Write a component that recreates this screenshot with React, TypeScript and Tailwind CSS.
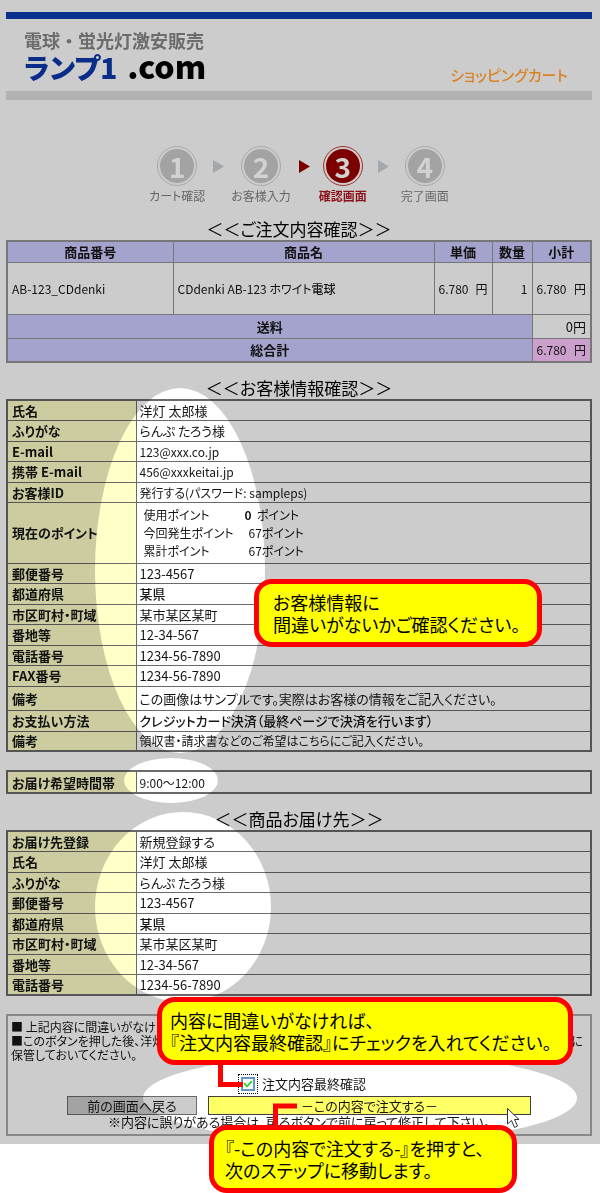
import type { ReactNode } from "react"

type Row = { label: string; value: ReactNode; size?: string; small?: boolean }

const points = [
  { label: "使用ポイント", value: <><b>0</b>&nbsp; ポイント</>, pad: "" },
  { label: "今回発生ポイント", value: "67ポイント", pad: "pl-1" },
  { label: "累計ポイント", value: "67ポイント", pad: "pl-1" },
]

const Points = () => (
  <div className="px-1">
    {points.map((p) => (
      <div key={p.label} className="flex leading-[18px]">
        <span className="w-[101px]">{p.label}</span>
        <span className={p.pad}>{p.value}</span>
      </div>
    ))}
  </div>
)

const customer: Row[] = [
  { label: "氏名", value: "洋灯 太郎様" },
  { label: "ふりがな", value: "らんぷ たろう様" },
  { label: "E-mail", value: "123@xxx.co.jp", small: true },
  { label: "携帯 E-mail", value: "456@xxxkeitai.jp", small: true },
  { label: "お客様ID", value: "発行する(パスワード: sampleps)", small: true },
  { label: "現在のポイント", value: <Points />, size: "h-[61px]", small: true },
  { label: "郵便番号", value: "123-4567" },
  { label: "都道府県", value: <span className="font-medium">某県</span> },
  { label: "市区町村・町域", value: "某市某区某町" },
  { label: "番地等", value: "12-34-567" },
  { label: "電話番号", value: "1234-56-7890" },
  { label: "FAX番号", value: "1234-56-7890" },
  { label: "備考", value: "この画像はサンプルです。実際はお客様の情報をご記入ください。", size: "h-6" },
  { label: "お支払い方法", value: <span className="font-medium">クレジットカード決済（最終ページで決済を行います）</span> },
  { label: "備考", value: "領収書・請求書などのご希望はこちらにご記入ください。", small: true },
]

const delivery: Row[] = [
  { label: "お届け先登録", value: "新規登録する" },
  { label: "氏名", value: "洋灯 太郎様" },
  { label: "ふりがな", value: "らんぷ たろう様" },
  { label: "郵便番号", value: "123-4567" },
  { label: "都道府県", value: <span className="font-medium">某県</span> },
  { label: "市区町村・町域", value: "某市某区某町" },
  { label: "番地等", value: "12-34-567" },
  { label: "電話番号", value: "1234-56-7890" },
]

const steps = [
  { no: "1", label: "カート確認", gap: "w-[26px]" },
  { no: "2", label: "お客様入力", gap: "w-7" },
  { no: "3", label: "確認画面", gap: "w-[34px]" },
  { no: "4", label: "完了画面", gap: "" },
]

const Heading = ({ children }: { children: ReactNode }) => (
  <h2 className="text-center text-[17px] leading-[22px] text-black">{children}</h2>
)

const InfoTable = ({ rows }: { rows: Row[] }) => (
  <table className="w-full table-fixed border-collapse border-2 border-[#555] text-[13px] leading-[17px]">
    <colgroup>
      <col className="w-[129px]" />
      <col />
    </colgroup>
    <tbody>
      {rows.map((r, i) => (
        <tr key={i} className={r.size ?? "h-5 even:h-[21px]"}>
          <th scope="row" className="border border-[#555] bg-[#cccca0] p-0 pl-1 text-left font-bold whitespace-nowrap">
            {r.label}
          </th>
          <td className={`border border-[#555] p-0 pl-[3px] ${r.small ? "text-[12px]" : ""}`}>{r.value}</td>
        </tr>
      ))}
    </tbody>
  </table>
)

const Steps = () => (
  <ol className="flex justify-center">
    {steps.map((s) => {
      const active = s.no === "3"
      return (
        <li key={s.no} className="flex">
          <div className="flex flex-col items-center">
            <div className={`size-10 rounded-full border p-[2px] ${active ? "border-[#a03030]" : "border-[#aaa]"}`}>
              <div
                className={`flex size-full items-center justify-center rounded-full text-[28px] leading-8 font-bold text-[#d2d2d2] ${active ? "bg-[#7c0000]" : "bg-[#a3a3a3]"}`}
              >
                {s.no}
              </div>
            </div>
            <span className={`text-[12px] leading-[20px] ${active ? "font-bold text-[#8c1018]" : "text-[#666]"}`}>
              {s.label}
            </span>
          </div>
          {s.gap && (
            <div className={`flex h-10 items-center justify-center ${s.gap}`}>
              <svg width="11" height="13" viewBox="0 0 11 13" aria-hidden="true">
                <path d="M0 0L11 6.5L0 13Z" fill={s.no === "2" ? "#7c0000" : "#a3a8ac"} />
              </svg>
            </div>
          )}
        </li>
      )
    })}
  </ol>
)

const Price = () => (
  <span className="flex justify-between text-[12px]">
    <span>6.780</span>
    <span>円</span>
  </span>
)

const OrderTable = () => (
  <table className="w-full table-fixed border-collapse border-2 border-[#777] text-[13px] leading-[17px] [&_td]:border [&_td]:border-[#777] [&_td]:px-1 [&_td]:py-0 [&_th]:border [&_th]:border-[#777] [&_th]:bg-[#a3a3cd] [&_th]:p-0">
    <colgroup>
      <col className="w-[166px]" />
      <col />
      <col className="w-[58px]" />
      <col className="w-[40px]" />
      <col className="w-[59px]" />
    </colgroup>
    <thead>
      <tr className="h-[21px]">
        <th>商品番号</th>
        <th>商品名</th>
        <th>単価</th>
        <th>数量</th>
        <th>小計</th>
      </tr>
    </thead>
    <tbody>
      <tr className="h-[52px] text-[12px] whitespace-nowrap">
        <td>AB-123_CDdenki</td>
        <td>CDdenki AB-123 ホワイト<span className="font-medium">電球</span></td>
        <td><Price /></td>
        <td className="text-right">1</td>
        <td><Price /></td>
      </tr>
      <tr className="h-6">
        <th colSpan={4}>送料</th>
        <td className="text-right">0円</td>
      </tr>
      <tr className="h-6">
        <th colSpan={4}>総合計</th>
        <td className="bg-[#cca0cc]"><Price /></td>
      </tr>
    </tbody>
  </table>
)

// Brightens the dimmed page below it back to full strength
const Spot = ({ className }: { className: string }) => (
  <div className={`pointer-events-none absolute rounded-[50%] bg-[#333] mix-blend-color-dodge ${className}`} />
)

const Callout = ({ className, children }: { className: string; children: ReactNode }) => (
  <div
    className={`absolute h-[68px] rounded-[18px] border-[5px] border-[#f00] bg-[#ff0] pt-[7px] text-[18px] leading-[22px] whitespace-nowrap text-black ${className}`}
  >
    {children}
  </div>
)

export default function App() {
  return (
    <div className="relative bg-white pb-[49px] font-['Noto_Sans_CJK_JP',sans-serif] text-[#111] [font-feature-settings:'palt']">
      <div className="bg-[#ccc] pt-3 pr-2 pb-2 pl-1.5">
        <header>
          <div className="h-[7px] bg-[#0b318f]" />
          <div className="flex h-[72px] items-end justify-between pr-6 pb-[9px] pl-[18px]">
            <div>
              <p className="text-[18px] leading-5 font-bold text-[#6c6c6c] [font-feature-settings:normal]">電球・蛍光灯激安販売</p>
              <h1 className="flex items-baseline gap-2.5 text-[28px] leading-[30px] font-black text-[#0a2d8a]">
                <span>ランプ1</span>
                <span className="text-[32px] text-black">.com</span>
              </h1>
            </div>
            <p className="text-[15px] leading-[15px] font-medium text-[#d98324]">ショッピングカート</p>
          </div>
          <div className="h-[9px] bg-[#b2b2b2]" />
        </header>

        <main className="pt-[46px]">
          <Steps />

          <div className="pt-3">
            <Heading>＜＜ご注文内容確認＞＞</Heading>
            <OrderTable />
          </div>

          <div className="pt-[14px]">
            <Heading>＜＜お客様情報確認＞＞</Heading>
            <InfoTable rows={customer} />
          </div>

          <div className="pt-[18px]">
            <InfoTable rows={[{ label: "お届け希望時間帯", value: "9:00～12:00", size: "h-[22px]", small: true }]} />
          </div>

          <div className="pt-[14px]">
            <Heading>＜＜商品お届け先＞＞</Heading>
            <InfoTable rows={delivery} />
          </div>

          <form
            className="mt-[18px] h-[122px] border-2 border-[#888] px-[3px] pt-1 text-[13px]"
            onSubmit={(e) => e.preventDefault()}
          >
            <div className="text-[12px] leading-[14px]">
              <p>■ 上記内容に間違いがなけ</p>
              <p className="flex justify-between pr-1">
                <span>■このボタンを押した後、洋灯</span>
                <span>に</span>
              </p>
              <p>保管しておいてください。</p>
            </div>
            <label className="mt-3 ml-[227px] flex w-fit items-center gap-1 leading-5">
              <span className="relative flex size-5 items-center justify-center border border-dotted border-black">
                <input
                  type="checkbox"
                  defaultChecked
                  className="size-[14px] appearance-none border-2 border-[#50789c] bg-white"
                />
                <svg className="pointer-events-none absolute" width="10" height="10" viewBox="0 0 10 10" aria-hidden="true">
                  <path d="M1 4L4 7.5L9 2" fill="none" stroke="#28a428" strokeWidth="2" />
                </svg>
              </span>
              注文内容最終確認
            </label>
            <div className="mt-[2px] flex gap-[11px] pr-14 pl-14">
              <button type="button" className="h-[19px] w-[130px] border border-[#555] bg-[#a3a3a3] leading-[17px]">
                前の画面へ戻る
              </button>
              <button type="submit" className="h-[19px] flex-1 border border-[#333] bg-[#cccc52] leading-[17px]">
                －この内容で注文する－
              </button>
            </div>
            <p className="text-center leading-[14px]">※内容に誤りがある場合は、戻るボタンで前に戻って修正して下さい。</p>
          </form>
        </main>
      </div>

      <Spot className="top-[388px] left-[95px] h-[365px] w-[170px]" />
      <Spot className="top-[758px] left-[124px] h-[45px] w-[94px]" />
      <Spot className="top-[812px] left-[95px] h-[190px] w-[176px]" />
      <Spot className="top-[1053px] left-[143px] h-[90px] w-[434px]" />

      {/* leader lines from the balloons to the controls */}
      <svg className="pointer-events-none absolute top-[1060px] left-[210px]" width="100" height="80" aria-hidden="true">
        <path d="M10.500 0V24.500H33M87 46H65.500V75" fill="none" stroke="#f00" strokeWidth="5" />
      </svg>
      <svg className="pointer-events-none absolute top-[1107px] left-[506px]" width="16" height="22" viewBox="0 0 16 22" aria-hidden="true">
        <path d="M1.500 1.500V17L5.500 13.500L8.500 20.500L11.500 19L8.500 12.500H13Z" fill="#fff" stroke="#333" />
      </svg>

      <Callout className="top-[579px] left-[254px] w-[288px] pl-[14px]">
        <p>お客様情報に</p>
        <p>間違いがないかご確認ください。</p>
      </Callout>
      <Callout className="top-[997px] left-[157px] w-[416px] pl-2">
        <p>内容に間違いがなければ、</p>
        <p>『注文内容最終確認』にチェックを入れてください。</p>
      </Callout>
      <Callout className="top-[1125px] left-[209px] w-[308px] pl-[11px]">
        <p>『-この内容で注文する-』を押すと、</p>
        <p>次のステップに移動します。</p>
      </Callout>
    </div>
  )
}
